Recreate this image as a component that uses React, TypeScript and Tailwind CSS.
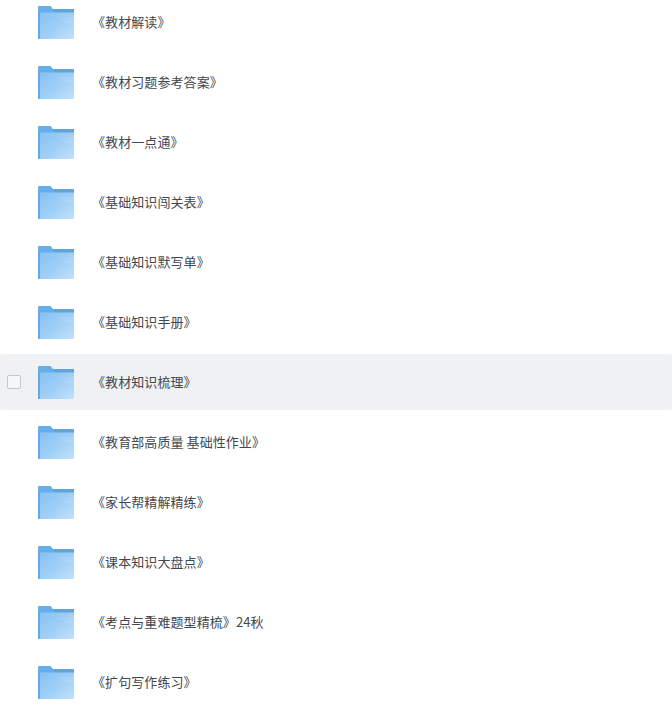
const items = [
  "《教材解读》",
  "《教材习题参考答案》",
  "《教材一点通》",
  "《基础知识闯关表》",
  "《基础知识默写单》",
  "《基础知识手册》",
  "《教材知识梳理》",
  "《教育部高质量 基础性作业》",
  "《家长帮精解精练》",
  "《课本知识大盘点》",
  "《考点与重难题型精梳》24秋",
  "《扩句写作练习》",
];

const HOVERED = 6;

const FolderIcon = ({ id }: { id: number }) => (
  <svg width="36" height="34" viewBox="0 0 36 34" className="shrink-0">
    <defs>
      <linearGradient id={`front-${id}`} x1="0" y1="0" x2="1" y2="1">
        <stop offset="0" stopColor="#86c1f2" />
        <stop offset="0.55" stopColor="#a2d0f7" />
        <stop offset="1" stopColor="#c2e1fb" />
      </linearGradient>
    </defs>
    {/* tab and back sheet */}
    <path d="M0 2a1 1 0 0 1 1-1h11.500l2.500 3H35a1 1 0 0 1 1 1v8H0z" fill="#67afea" />
    <path d="M15 4h21v4H17z" fill="#5ea5dd" />
    <path d="M0 6h3v28H1a1 1 0 0 1-1-1z" fill="#62aae6" />
    {/* front sheet */}
    <path d="M2 7.500h34V33a1 1 0 0 1-1 1H2z" fill={`url(#front-${id})`} />
    <path d="M20 12h16v6H26z" fill="#ffffff" opacity="0.08" />
  </svg>
);

export default function App() {
  return (
    <div className="w-[672px] h-[716px] overflow-hidden bg-white font-['Noto_Sans_CJK_SC','Liberation_Sans',sans-serif]">
      <div className="-mt-[6px] flex flex-col gap-1">
        {items.map((name, i) => (
          <div
            key={name}
            className={`flex items-center h-[56px] shrink-0 ${i === HOVERED ? "bg-[#f0f1f3] rounded-[2px]" : ""}`}
          >
            <div className="w-[38px] pl-[7px] shrink-0">
              {i === HOVERED && (
                <div className="w-[14px] h-[14px] rounded-[2px] border border-[#c6c8cc] bg-[#f6f7f8]" />
              )}
            </div>
            <FolderIcon id={i} />
            <span className="ml-[18px] text-[13px] tracking-[0.08px] text-[#43474e] whitespace-pre">{name}</span>
          </div>
        ))}
      </div>
    </div>
  );
}
